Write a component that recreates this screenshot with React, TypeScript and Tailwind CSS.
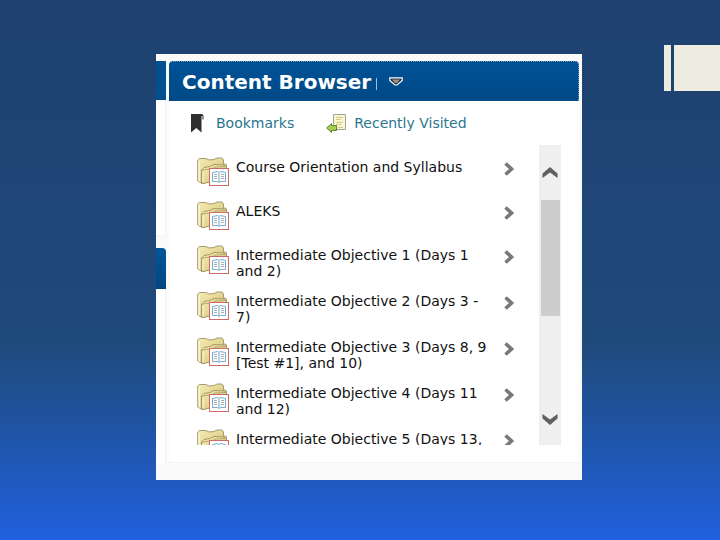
const items = [
  "Course Orientation and Syllabus",
  "ALEKS",
  "Intermediate Objective 1 (Days 1 and 2)",
  "Intermediate Objective 2 (Days 3 - 7)",
  "Intermediate Objective 3 (Days 8, 9 [Test #1], and 10)",
  "Intermediate Objective 4 (Days 11 and 12)",
  "Intermediate Objective 5 (Days 13,",
];

function FolderIcon() {
  return (
    <svg width="32" height="30" viewBox="0 0 32 30" fill="none" className="shrink-0">
      <defs>
        <linearGradient id="folder" x1="0" y1="0" x2="1" y2="1">
          <stop offset="0" stopColor="#f5ecb4" />
          <stop offset="1" stopColor="#d3bf74" />
        </linearGradient>
      </defs>
      <path d="M0.7 3L2.5 1.5H9L12 3L17 2.5L20 1H25L26.5 3V21L5 26.5L0.7 24Z" fill="url(#folder)" stroke="#a59d75" />
      <path d="M2.2 4V24.5" stroke="#fbf6d8" strokeWidth="1.4" />
      <path d="M26.5 7H28.5V20" stroke="#b3a46d" />
      <path d="M4.5 26V13L7 10.5L13 9.5L17 7.5L29.5 8V20L7 26.5Z" fill="url(#folder)" stroke="#a59a66" />
      <path d="M5 13.5L8 12.5L15 12L18 10L29 9.5" stroke="#b7a76c" />
      <path d="M6.2 25V14.5" stroke="#faf3c8" />
      <rect x="12.5" y="11.5" width="19" height="17" fill="#fff" stroke="#cb6a66" />
      <path d="M15.5 15.5L21 14.5L22 15.5L23 14.5L28.5 15.5V24.5H23.5L22 25.5L20.5 24.5H15.5Z" fill="#fafcff" stroke="#7ca8c9" />
      <path d="M22 15.5V25" stroke="#7ca8c9" />
      <path d="M17 17.5H20M17 19.5H20M17 21.5H20M24 17.5H27M24 19.5H27M24 21.5H27" stroke="#a9b0af" />
    </svg>
  );
}

function BookmarkIcon() {
  return (
    <svg width="14" height="19" viewBox="0 0 14 19" className="shrink-0">
      <path d="M1 0H11Q13.5 0 13.5 2V5.5H12.5V2H11.5V18.5L6.3 14L1 18.5Z" fill="#2e2e2e" />
    </svg>
  );
}

function RecentIcon() {
  return (
    <svg width="20" height="19" viewBox="0 0 20 19" fill="none" className="shrink-0">
      <path d="M7.5 0.5H19.5V15.5H7.5Z" fill="#fbf6d2" stroke="#a3a59b" />
      <path d="M10 3.5H17M10 5.5H15M10 8.5H17M10 10.5H15M12 13.5H17" stroke="#d6c983" />
      <path d="M0.7 14L5.5 9.5V11.5H10.5V16.5H5.5V18.5Z" fill="#a4cd57" stroke="#5e8732" strokeLinejoin="round" />
    </svg>
  );
}

function MenuIcon() {
  return (
    <svg width="14" height="9" viewBox="0 0 14 9" fill="none">
      <path d="M0.8 0.8H13.2V3.5L8 8H6L0.8 3.5Z" fill="#17324e" stroke="#fff" strokeWidth="1.2" />
      <path d="M3 2.5H11L8 6H6Z" fill="#a58d7c" />
    </svg>
  );
}

function Chevron({ className }: { className: string }) {
  return (
    <svg width="11" height="14" viewBox="0 0 11 14" fill="none" stroke="currentColor" className={className}>
      <path d="M1.5 1.5L7.5 7L1.5 12.5" strokeWidth="3.6" />
    </svg>
  );
}

function ScrollArrow({ className }: { className?: string }) {
  return (
    <svg width="16" height="11" viewBox="0 0 16 11" fill="#606060" className={className}>
      <path d="M8 0L15.5 6.5V11L8 5.5L0.5 11V6.5Z" />
    </svg>
  );
}

export default function App() {
  return (
    <div className="grid min-h-screen grid-cols-[156px_1fr_138px] bg-linear-to-b from-[#1e416f] via-[#1f4a7c] via-64% to-[#2160de] font-['DejaVu_Sans',Verdana,sans-serif]">
      <main className="col-start-2 my-[54px] flex self-start bg-[#fafafa] pt-[7px] pr-[3px] pb-[17px]">
        {/* Edge of the neighbouring modules */}
        <div className="mr-[3px] flex w-[10px] shrink-0 flex-col">
          <div className="h-[39px] bg-[#004f91]" />
          <div className="h-[136px] border-r border-b border-dotted border-gray-200 bg-white" />
          <div className="mt-3 h-[41px] rounded-tr-sm bg-linear-to-b from-[#00569c] to-[#004680]" />
          <div className="flex-1 border-r border-dotted border-gray-200 bg-white" />
        </div>

        <section className="min-w-0 flex-1 border-b border-dotted border-gray-200 bg-white">
          <header className="flex h-10 items-center rounded-t-sm border-t border-r border-dotted border-t-[#6d9bc4] border-r-[#6d9bc4] bg-linear-to-b from-[#005297] to-[#004985] pl-[13px] text-white">
            <h1 className="text-[20px] leading-6 font-bold whitespace-nowrap">Content Browser</h1>
            <span className="mt-1 ml-[5px] h-3 w-px bg-[#9dbbd6]" />
            <button type="button" aria-label="Module menu" className="ml-3">
              <MenuIcon />
            </button>
          </header>

          <nav className="flex h-11 items-center gap-8 pl-[21px] text-[14px] leading-4 whitespace-nowrap text-[#2b7690]">
            <a href="#bookmarks" className="flex items-center gap-3">
              <BookmarkIcon />
              Bookmarks
            </a>
            <a href="#recent" className="flex items-center gap-2">
              <RecentIcon />
              Recently Visited
            </a>
          </nav>

          <div className="mb-[17px] flex h-[300px] pr-[18px] pl-7">
            <ul className="min-w-0 flex-1 overflow-hidden pt-3 pr-6 text-[14px] leading-4 text-[#111]">
              {items.map((item) => (
                <li key={item}>
                  <a href="#item" className="flex min-h-11 items-start">
                    <FolderIcon />
                    <span className="ml-[7px] min-w-0 flex-1 pt-0.5 pb-3">{item}</span>
                    <Chevron className="mt-[5px] ml-[11px] shrink-0 text-[#787878]" />
                  </a>
                </li>
              ))}
            </ul>
            <div className="flex w-[22px] shrink-0 flex-col items-center bg-[#efefef]">
              <button type="button" aria-label="Scroll up" className="flex h-[55px] items-center">
                <ScrollArrow />
              </button>
              <div className="h-[116px] w-[19px] bg-[#cdcdcd]" />
              <button type="button" aria-label="Scroll down" className="mt-auto flex h-[52px] items-center">
                <ScrollArrow className="rotate-180" />
              </button>
            </div>
          </div>
        </section>
      </main>

      {/* Slide accent bars */}
      <div className="mt-[45px] flex h-[46px] justify-end gap-[3px]">
        <div className="w-[7px] bg-[#eeece1]" />
        <div className="w-[46px] bg-[#eeece1]" />
      </div>
    </div>
  );
}
